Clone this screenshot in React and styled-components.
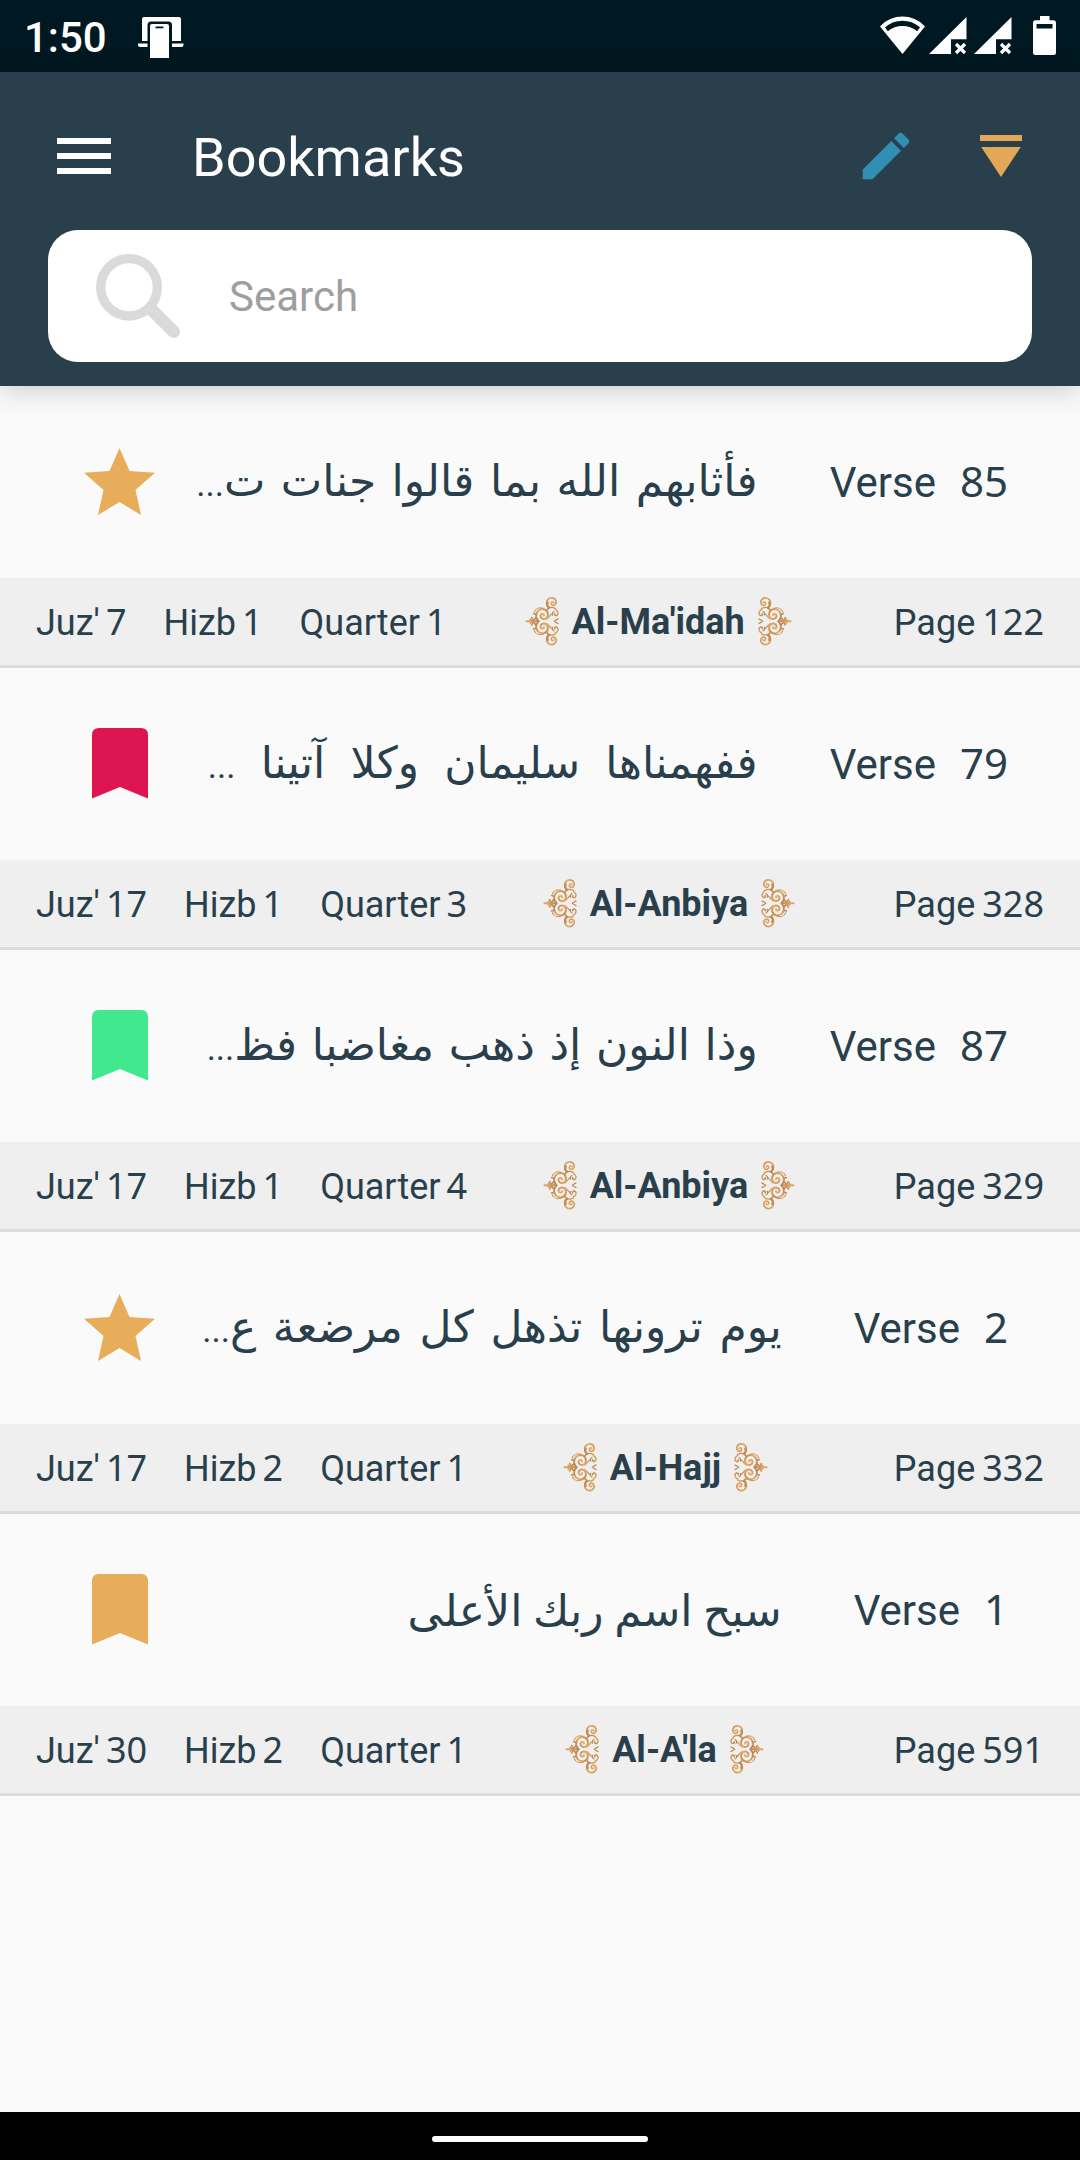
import React from "react";
import styled, { createGlobalStyle } from "styled-components";

const GlobalStyle = createGlobalStyle`
  * { box-sizing: border-box; }
  body { margin: 0; background: #fafafa; }
`;

const Screen = styled.div`
  width: 1080px;
  height: 2160px;
  display: flex;
  flex-direction: column;
  overflow: hidden;
  background: #fafafa;
  color: #293f4c;
  font-family: Roboto, sans-serif;
`;

const StatusBar = styled.div`
  flex: none;
  height: 72px;
  display: flex;
  align-items: center;
  padding: 0 24px 0 24px;
  background: #001821;
  color: #fff;
`;

const Clock = styled.span`
  font-size: 42px;
  font-weight: 500;
  line-height: 48px;
  padding-top: 4px;
  margin-right: 31px;
  white-space: nowrap;
`;

const StatusIcons = styled.div`
  margin-left: auto;
  display: flex;
  height: 72px;
`;

const Header = styled.header`
  flex: none;
  height: 314px;
  padding: 0 48px;
  background: #293f4c;
  box-shadow: 0 4px 26px rgba(0, 0, 0, 0.19);
  z-index: 1;
`;

const Toolbar = styled.div`
  height: 158px;
  display: flex;
  align-items: center;
  padding-top: 10px;
`;

const Title = styled.h1`
  margin: 0 auto 0 72px;
  font-size: 54px;
  font-weight: 400;
  line-height: 64px;
  color: #fff;
  padding-top: 4px;
`;

const ToolIcon = styled.svg`
  flex: none;
  display: block;
`;

const SearchBox = styled.label`
  height: 132px;
  display: flex;
  align-items: center;
  padding-left: 42px;
  border-radius: 30px;
  background: #fff;
`;

const SearchText = styled.span`
  margin-left: 41px;
  padding-top: 2px;
  font-size: 42px;
  line-height: 50px;
  color: #9e9e9e;
`;

const List = styled.main`
  flex: 1;
`;

const Row = styled.section`
  height: 282px;
  border-bottom: 3px solid #dcdcdc;
`;

const VerseLine = styled.div`
  height: 192px;
  display: flex;
  align-items: center;
  padding: 0 72px 0 78px;
`;

const Excerpt = styled.span`
  margin-left: auto;
  margin-right: 72px;
  padding-top: 2px;
  direction: rtl;
  font-family: "DejaVu Sans", sans-serif;
  font-size: 44px;
  line-height: 60px;
  word-spacing: ${(p) => p.$wordGap}px;
  white-space: nowrap;
`;

const Ellipsis = styled.span`
  display: inline-block;
  font-family: Roboto, sans-serif;
  font-size: 35px;
`;

const VerseNumber = styled.span`
  display: flex;
  align-items: baseline;
  gap: 24px;
  font-size: 42px;
  line-height: 50px;
`;

const Digits = styled.span`
  font-family: "Noto Sans", sans-serif;
  line-height: 50px;
`;

const MetaLine = styled.div`
  height: 87px;
  display: flex;
  align-items: center;
  padding: 0 36px;
  background: #efefef;
  font-size: 36px;
`;

const Meta = styled.span`
  display: flex;
  align-items: baseline;
  gap: ${(p) => p.$gap || 6}px;
  line-height: 50px;
  padding-top: 2px;
  margin-right: ${(p) => p.$after || 0}px;
`;

const Surah = styled.div`
  flex: 1;
  display: flex;
  align-items: center;
  justify-content: center;
  gap: 13px;
  margin-right: ${(p) => p.$trail}px;
`;

const SurahName = styled.strong`
  font-weight: 700;
  line-height: 44px;
`;

const FlourishSvg = styled.svg`
  display: block;
  transform: ${(p) => (p.$flip ? "scaleX(-1)" : "none")};
`;

const NavBar = styled.footer`
  flex: none;
  height: 48px;
  display: flex;
  justify-content: center;
  align-items: center;
  padding-top: 6px;
  background: #000;
`;

const NavHandle = styled.div`
  width: 216px;
  height: 6px;
  border-radius: 3px;
  background: #fff;
`;

function NotificationIcon() {
  return (
    <ToolIcon width="46" height="72" viewBox="0 0 46 72" fill="#fff">
      <path d="M4 41V19q0-2 2-2h35q2 0 2 2v22h-9V25q0-3.500-3.500-3.500H13q-3.500 0-3.500 3.500v16z" />
      <path d="M0 43.500h9.500v3.500H2q-2 0-2-2zM34 43.500h11.500v1.500q0 2-2 2H34z" />
      <path d="M12 58V26q0-2 2-2h15q2 0 2 2v32z" />
      <rect x="17.500" y="26.500" width="8" height="1.800" fill="#001821" />
    </ToolIcon>
  );
}

function StatusGlyphs() {
  return (
    <ToolIcon width="178" height="72" viewBox="878 0 178 72" fill="#fff">
      <path
        fillRule="evenodd"
        d="M880 26.500C892 13.200 913 13.200 925 26.500L902.500 54zM885 27.200L887.800 31.300C896 24.300 909 24.300 917.200 31.300L920 27.200C910 18.600 895 18.600 885 27.200z"
      />
      {[929, 974].map((x) => (
        <g key={x}>
          <path d={`M${x} 54L${x + 37.500} 17V39.300H${x + 22}V54z`} />
          <path
            d={`M${x + 27} 44l9 9M${x + 36} 44l-9 9`}
            stroke="#fff"
            strokeWidth="3.200"
          />
        </g>
      ))}
      <path
        fillRule="evenodd"
        d="M1040 16h9.500v4.300h4q2.500 0 2.500 2.500v29.700q0 2.500-2.500 2.500h-18q-2.500 0-2.500-2.500V22.800q0-2.500 2.500-2.500h4.500zM1036.500 24v4.500h16V24z"
      />
    </ToolIcon>
  );
}

function MenuIcon() {
  return (
    <ToolIcon width="72" height="72" viewBox="0 0 24 24" fill="#fff">
      <path d="M3 18h18v-2H3v2zm0-5h18v-2H3v2zm0-7v2h18V6H3z" />
    </ToolIcon>
  );
}

function EditIcon() {
  return (
    <ToolIcon width="62" height="62" viewBox="0 0 24 24" fill="#318fb3">
      <path d="M3 17.250V21h3.750L17.810 9.940l-3.750-3.750L3 17.250zM20.710 7.040a.996.996 0 0 0 0-1.410l-2.340-2.340a.996.996 0 0 0-1.410 0l-1.830 1.830 3.750 3.750 1.830-1.830z" />
    </ToolIcon>
  );
}

const SortIconSvg = styled(ToolIcon)`
  margin: 0 10px 0 63px;
`;

function SortIcon() {
  return (
    <SortIconSvg width="42" height="62" viewBox="0 0 42 62" fill="#e2a858">
      <path d="M0 10h42v6H0zM1.200 22h39.600L21 52z" />
    </SortIconSvg>
  );
}

function SearchIcon() {
  return (
    <ToolIcon width="98" height="132" viewBox="0 0 98 132" fill="none" stroke="#dadada">
      <ellipse cx="39" cy="57.300" rx="28.300" ry="28.700" strokeWidth="9.300" />
      <path d="M61 79l22.800 22.700" strokeWidth="12.500" strokeLinecap="round" />
    </ToolIcon>
  );
}

function Marker({ kind, color }) {
  return (
    <ToolIcon width="84" height="192" viewBox="0 0 84 192" fill={color}>
      {kind === "star" ? (
        <path d="M41.500 62l10 23 25.500 1.700-19.500 17.300 5.500 25-21.500-13-21.500 13 5.500-25L6 86.700l25.500-1.700z" />
      ) : (
        <path d="M14 130.500V67q0-7 7-7h42q7 0 7 7v63.500L42 119z" />
      )}
    </ToolIcon>
  );
}

function FlourishHalf() {
  return (
    <>
      <path d="M5 6c.2-1.800 2.600-1.600 2.700.2.100 2-2.600 2.900-4 1.400C1.400 5.200 3.600.9 7.400.9c4 0 5.800 3.900 4.700 7.100" />
      <path d="M11 5.500c1.300 1.500.8 4-1 5" strokeWidth="2.200" />
      <path d="M3.500 11.600c3-1.900 6.500-1.300 8.300.8" />
      <path d="M15 18.600c-.2-2.200 2.900-2.400 3.400-.3.600 2.900-2.900 4.700-5.400 2.900-3.600-2.800-1.800-8.400 2.600-9 4.800-.6 8 3.600 7.200 7.800-.4 1.800-1.200 3-2.400 3.900" strokeWidth="1.800" />
      <path d="M16 11.400c4.200-1.300 7.600.3 8.600 3.400" strokeWidth="1.200" />
      <path d="M5 14.600c1.700 1 2 2.300 1.200 3.600M6.500 16.500c2.500 1 3 4 6 5.700" strokeWidth="1.200" />
      <path d="M3.600 12.700c-2.400.8-3.300 3.500-2 5.200 1.200 1.300 3.200.2 2.600-1.300M1 22l3.600 2" strokeWidth="1.400" />
      <path d="M23 17.300l2.300-.8M23.500 21.200l2.400 2.500M27.300 20.600l-.9 2.200" strokeWidth="1.700" />
    </>
  );
}

function Flourish({ flip }) {
  const id = flip ? "gold-left" : "gold-right";
  return (
    <FlourishSvg
      $flip={flip}
      width="34"
      height="49"
      viewBox="0 0 34 49"
      fill="none"
      stroke={`url(#${id})`}
      strokeWidth="1.600"
      strokeLinecap="round"
    >
      <defs>
        <linearGradient id={id} gradientUnits="userSpaceOnUse" x1="0" y1="0" x2="12" y2="10" spreadMethod="reflect">
          <stop offset="0" stopColor="#b98350" />
          <stop offset="0.500" stopColor="#e3aa66" />
          <stop offset="1" stopColor="#b9834a" />
        </linearGradient>
      </defs>
      <FlourishHalf />
      <g transform="translate(0 48.500) scale(1 -1)">
        <FlourishHalf />
      </g>
      <path d="M22 24.250L32.500 24.300M28.500 22.500v3.600" strokeWidth="2" />
    </FlourishSvg>
  );
}

const GOLD = "#e7ad5b";

const bookmarks = [
  { kind: "star", color: GOLD, text: "فأثابهم الله بما قالوا جنات ت", clipped: true, wordGap: 1.5, verse: 85, juz: 7, hizb: 1, quarter: 1, surah: "Al-Ma'idah", trail: 24, page: 122 },
  { kind: "ribbon", color: "#dd1551", text: "ففهمناها سليمان وكلا آتينا ", clipped: true, wordGap: 11.3, verse: 79, juz: 17, hizb: 1, quarter: 3, surah: "Al-Anbiya", trail: 23, page: 328 },
  { kind: "ribbon", color: "#41e88d", text: "وذا النون إذ ذهب مغاضبا فظ", clipped: true, wordGap: 0.7, verse: 87, juz: 17, hizb: 1, quarter: 4, surah: "Al-Anbiya", trail: 23, page: 329 },
  { kind: "star", color: GOLD, text: "يوم ترونها تذهل كل مرضعة ع", clipped: true, wordGap: 2.7, verse: 2, juz: 17, hizb: 2, quarter: 1, surah: "Al-Hajj", trail: 30, page: 332 },
  { kind: "ribbon", color: GOLD, text: "سبح اسم ربك الأعلى", clipped: false, wordGap: -3.4, verse: 1, juz: 30, hizb: 2, quarter: 1, surah: "Al-A'la", trail: 32, page: 591 },
];

function MetaItem({ label, value, after, gap }) {
  return (
    <Meta $after={after} $gap={gap}>
      <span>{label}</span>
      <Digits>{value}</Digits>
    </Meta>
  );
}

function BookmarkRow({ item }) {
  return (
    <Row>
      <VerseLine>
        <Marker kind={item.kind} color={item.color} />
        <Excerpt lang="ar" $wordGap={item.wordGap}>
          {item.text}
          {item.clipped && <Ellipsis>...</Ellipsis>}
        </Excerpt>
        <VerseNumber>
          <span>Verse</span>
          <Digits>{item.verse}</Digits>
        </VerseNumber>
      </VerseLine>
      <MetaLine>
        <MetaItem label="Juz'" value={item.juz} after={37} />
        <MetaItem label="Hizb" value={item.hizb} after={37} />
        <MetaItem label="Quarter" value={item.quarter} />
        <Surah $trail={item.trail}>
          <Flourish flip />
          <SurahName>{item.surah}</SurahName>
          <Flourish />
        </Surah>
        <MetaItem label="Page" value={item.page} gap={7} />
      </MetaLine>
    </Row>
  );
}

export default function App() {
  return (
    <Screen>
      <GlobalStyle />
      <StatusBar>
        <Clock>1:50</Clock>
        <NotificationIcon />
        <StatusIcons>
          <StatusGlyphs />
        </StatusIcons>
      </StatusBar>
      <Header>
        <Toolbar>
          <MenuIcon />
          <Title>Bookmarks</Title>
          <EditIcon />
          <SortIcon />
        </Toolbar>
        <SearchBox>
          <SearchIcon />
          <SearchText>Search</SearchText>
        </SearchBox>
      </Header>
      <List>
        {bookmarks.map((item) => (
          <BookmarkRow key={item.page} item={item} />
        ))}
      </List>
      <NavBar>
        <NavHandle />
      </NavBar>
    </Screen>
  );
}
